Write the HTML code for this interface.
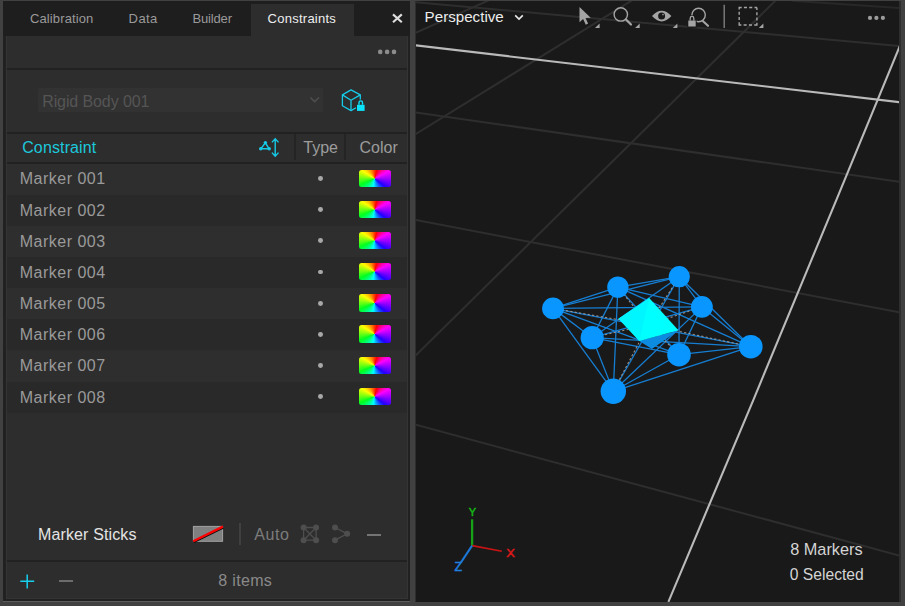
<!DOCTYPE html>
<html>
<head>
<meta charset="utf-8">
<title>Constraints</title>
<style>
html,body{margin:0;padding:0;}
body{width:905px;height:606px;overflow:hidden;background:#414141;font-family:"Liberation Sans",sans-serif;position:relative;}
.abs{position:absolute;}
.t{position:absolute;white-space:nowrap;line-height:1;}
#tabbar{left:3.3px;top:1.2px;width:407.2px;height:34.6px;background:#1e1e1e;}
#activetab{left:250.6px;top:3.8px;width:103px;height:32.2px;background:#2d2d2d;}
#panel{left:5.8px;top:35.8px;width:402.2px;height:563.5px;background:#2d2d2d;border:solid #343434;border-width:0 1.1px 1px 1.2px;box-sizing:border-box;}
#panelL{left:3.3px;top:35.8px;width:407px;height:565.2px;background:#212121;}
#panelB{left:3.3px;top:600.8px;width:407px;height:1.1px;background:#5c5c5c;}
.hl{position:absolute;left:7px;width:400px;height:2px;background:#212121;}
.row{position:absolute;left:7px;width:400px;height:31.17px;}
.row.odd{background:#2e2e2e;}
.row.even{background:#292929;}
.row .nm{position:absolute;left:12.7px;top:7.9px;font-size:16px;color:#9a9a9a;white-space:nowrap;line-height:1;letter-spacing:0.5px;}
.row .dot{position:absolute;left:311.1px;top:12.6px;width:4.8px;height:4.8px;border-radius:50%;background:#a8a8a8;}
.row .sw{position:absolute;left:352.4px;top:6px;width:31.3px;height:17.4px;border-radius:2.5px;background:conic-gradient(from 15deg at 48.5% 50%,#ff0000 0deg,#ff00ff 48deg,#2000ff 113deg,#00ffff 174deg,#00ff20 231deg,#ffff00 288deg,#ff0000 360deg);}
#vp{left:415.6px;top:1.2px;width:483.6px;height:600.4px;background:#191919;overflow:hidden;}
</style>
</head>
<body>
<!-- LEFT PANEL -->
<div id="tabbar" class="abs"></div>
<div id="activetab" class="abs"></div>
<div id="panelL" class="abs"></div>
<div id="panelB" class="abs"></div>
<div id="panel" class="abs"></div>

<span class="t" style="left:30px;top:12px;font-size:13px;color:#9a9a9a;letter-spacing:0.12px;">Calibration</span>
<span class="t" style="left:128.6px;top:12px;font-size:13px;color:#9a9a9a;letter-spacing:0.4px;">Data</span>
<span class="t" style="left:192.4px;top:12px;font-size:13px;color:#9a9a9a;letter-spacing:-0.15px;">Builder</span>
<span class="t" style="left:267.6px;top:12px;font-size:13px;color:#ededed;letter-spacing:0.25px;">Constraints</span>
<svg class="abs" style="left:390px;top:12px" width="14" height="14" viewBox="0 0 14 14"><path d="M3 2.4 L11.8 10.2 M11.8 2.4 L3 10.2" stroke="#dedede" stroke-width="2.1" fill="none"/></svg>

<!-- toolbar dots -->
<svg class="abs" style="left:376px;top:48px" width="22" height="8" viewBox="0 0 22 8"><circle cx="4.2" cy="3.9" r="2.3" fill="#8c8c8c"/><circle cx="11.1" cy="3.9" r="2.3" fill="#8c8c8c"/><circle cx="18" cy="3.9" r="2.3" fill="#8c8c8c"/></svg>
<div class="hl" style="top:68.2px;"></div>

<!-- dropdown -->
<div class="abs" style="left:38.2px;top:88.4px;width:284.6px;height:23.7px;background:#323232;border-radius:1.5px;"></div>
<span class="t" style="left:42.2px;top:94px;font-size:16px;color:#555;letter-spacing:-0.1px;">Rigid Body 001</span>
<svg class="abs" style="left:308px;top:95px" width="14" height="10" viewBox="0 0 14 10"><path d="M2.4 2.5 L6.7 6.6 L11 2.5" stroke="#4e4e4e" stroke-width="1.6" fill="none"/></svg>

<!-- cube lock icon -->
<svg class="abs" style="left:340px;top:89px" width="28" height="24" viewBox="0 0 28 24">
<g fill="none" stroke="#16cbe8" stroke-width="1.3" stroke-linejoin="round">
<path d="M20.3 10.4 V5.9 L11 0.9 L2.4 5.9 V16.8 L11 21.6 L16 18.8"/>
<path d="M2.4 5.9 L11 11.2 L20.3 5.9 M11 11.2 V21.6"/>
</g>
<rect x="17" y="15.8" width="7.6" height="6.1" fill="#0be2fb"/>
<path d="M19 15.8 V13.6 a1.75 1.75 0 0 1 3.5 0 V15.8" fill="none" stroke="#0be2fb" stroke-width="1.4"/>
</svg>

<div class="hl" style="top:131.6px;"></div>

<!-- header -->
<span class="t" style="left:22.2px;top:139.5px;font-size:16px;color:#1cc8dc;letter-spacing:0.13px;">Constraint</span>
<svg class="abs" style="left:257px;top:137px" width="26" height="22" viewBox="0 0 26 22">
<g fill="none" stroke="#16cbe8" stroke-width="1.4">
<path d="M8.4 5.8 L3.8 11.8 L12.1 11.8 Z"/>
<path d="M18.2 2.2 V18.6 M14.9 5.4 L18.2 1.8 L21.5 5.4 M14.9 15.6 L18.2 19.2 L21.5 15.6"/>
</g>
<circle cx="8.4" cy="5.6" r="1.7" fill="#16cbe8"/><circle cx="3.7" cy="11.8" r="1.7" fill="#16cbe8"/><circle cx="12.2" cy="11.8" r="1.7" fill="#16cbe8"/>
</svg>
<div class="abs" style="left:294.3px;top:133.6px;width:1.5px;height:26px;background:#242424;"></div>
<div class="abs" style="left:344.2px;top:133.6px;width:1.5px;height:26px;background:#242424;"></div>
<span class="t" style="left:303.3px;top:139.5px;font-size:16px;color:#9c9c9c;">Type</span>
<span class="t" style="left:359.5px;top:139.5px;font-size:16px;color:#9c9c9c;">Color</span>
<div class="hl" style="top:161.5px;"></div>

<!-- rows -->
<div class="row odd" style="top:163.5px"><span class="nm">Marker 001</span><span class="dot"></span><span class="sw"></span></div>
<div class="row even" style="top:194.7px"><span class="nm">Marker 002</span><span class="dot"></span><span class="sw"></span></div>
<div class="row odd" style="top:225.8px"><span class="nm">Marker 003</span><span class="dot"></span><span class="sw"></span></div>
<div class="row even" style="top:257px"><span class="nm">Marker 004</span><span class="dot"></span><span class="sw"></span></div>
<div class="row odd" style="top:288.2px"><span class="nm">Marker 005</span><span class="dot"></span><span class="sw"></span></div>
<div class="row even" style="top:319.3px"><span class="nm">Marker 006</span><span class="dot"></span><span class="sw"></span></div>
<div class="row odd" style="top:350.5px"><span class="nm">Marker 007</span><span class="dot"></span><span class="sw"></span></div>
<div class="row even" style="top:381.7px"><span class="nm">Marker 008</span><span class="dot"></span><span class="sw"></span></div>

<!-- marker sticks -->
<span class="t" style="left:38px;top:527px;font-size:16px;color:#e4e4e4;letter-spacing:0.13px;">Marker Sticks</span>
<svg class="abs" style="left:191px;top:524px" width="36" height="22" viewBox="0 0 36 22">
<rect x="2.4" y="2.4" width="29.2" height="14.9" fill="#808080" stroke="#a2a2a2" stroke-width="1"/>
<path d="M2.6 17.9 L32.3 3.3" stroke="#101010" stroke-width="2.6"/>
<path d="M2.2 17.2 L31.9 2.6" stroke="#ff0000" stroke-width="2.3"/>
</svg>
<div class="abs" style="left:239.2px;top:523.3px;width:1.5px;height:22px;background:#404040;"></div>
<span class="t" style="left:254.3px;top:527.3px;font-size:16px;color:#7c7c7c;letter-spacing:0.6px;">Auto</span>
<svg class="abs" style="left:299px;top:523px" width="24" height="24" viewBox="0 0 24 24">
<g stroke="#4e4e4e" stroke-width="1.3" fill="none"><path d="M4.6 4.5 H17.1 V17.2 H4.6 Z M4.6 4.5 L17.1 17.2 M17.1 4.5 L4.6 17.2"/></g>
<g fill="#4e4e4e"><circle cx="4.6" cy="4.5" r="3"/><circle cx="17.1" cy="4.5" r="3"/><circle cx="4.6" cy="17.2" r="3"/><circle cx="17.1" cy="17.2" r="3"/></g>
</svg>
<svg class="abs" style="left:330px;top:523px" width="24" height="24" viewBox="0 0 24 24">
<path d="M5 4.5 L17.1 10.8 L5 17.2" stroke="#4e4e4e" stroke-width="1.4" fill="none"/>
<g fill="#4e4e4e"><circle cx="5" cy="4.5" r="3"/><circle cx="17.1" cy="10.8" r="3"/><circle cx="5" cy="17.2" r="3"/></g>
</svg>
<div class="abs" style="left:366.8px;top:534.1px;width:13.8px;height:1.5px;background:#747474;"></div>

<div class="hl" style="top:559.5px;"></div>

<!-- bottom row -->
<svg class="abs" style="left:18px;top:572px" width="20" height="20" viewBox="0 0 20 20"><path d="M9.2 2.5 V16.4 M2.3 9.35 H16.2" stroke="#17d0ee" stroke-width="1.5" fill="none"/></svg>
<div class="abs" style="left:59.2px;top:580.4px;width:14px;height:1.5px;background:#6c6c6c;"></div>
<span class="t" style="left:218.2px;top:573.4px;font-size:16px;color:#8a8a8a;letter-spacing:0.35px;">8 items</span>

<!-- VIEWPORT -->
<div class="abs" style="left:414.6px;top:1.2px;width:486px;height:600.4px;background:#2e2e2e;"></div>
<div id="vp" class="abs">
<svg class="abs" style="left:0;top:0" width="483.6" height="600.4" viewBox="415.6 1.2 483.6 600.4">
<g fill="none" stroke="#2e2e2e" stroke-width="2">
<path d="M414 2.2 L901 46.4"/>
<path d="M414 33.5 L489.5 0"/>
<path d="M414 135 L632.5 0"/>
<path d="M414 112.4 L901 182.3"/>
<path d="M780 -4 L414 357"/>
<path d="M414 220 L901 313"/>
<path d="M414 424.6 L901 556.3"/>
<path d="M792 1 L901 8.3" stroke="#282828"/>
</g>
<g fill="none" stroke="#bababa" stroke-width="2.1">
<path d="M414 45.4 L901 102.6"/>
<path d="M900.3 44 L836 200 Q794 302 753 400 T668 602"/>
</g>
<g stroke="#167ed2" stroke-width="1.3" fill="none">
<path d="M552.6 308.6 L617.5 287.3"/>
<path d="M552.6 308.6 L678.9 276.9"/>
<path d="M552.6 308.6 L701.5 307.1"/>
<path d="M552.6 308.6 L591.8 337.9"/>
<path d="M552.6 308.6 L678.6 354.9"/>
<path d="M552.6 308.6 L750.4 346.9"/>
<path d="M552.6 308.6 L612.9 391.5"/>
<path d="M617.5 287.3 L678.9 276.9"/>
<path d="M617.5 287.3 L701.5 307.1"/>
<path d="M617.5 287.3 L591.8 337.9"/>
<path d="M617.5 287.3 L678.6 354.9"/>
<path d="M617.5 287.3 L750.4 346.9"/>
<path d="M617.5 287.3 L612.9 391.5"/>
<path d="M678.9 276.9 L701.5 307.1"/>
<path d="M678.9 276.9 L591.8 337.9"/>
<path d="M678.9 276.9 L678.6 354.9"/>
<path d="M678.9 276.9 L750.4 346.9"/>
<path d="M678.9 276.9 L612.9 391.5"/>
<path d="M701.5 307.1 L591.8 337.9"/>
<path d="M701.5 307.1 L678.6 354.9"/>
<path d="M701.5 307.1 L750.4 346.9"/>
<path d="M701.5 307.1 L612.9 391.5"/>
<path d="M591.8 337.9 L678.6 354.9"/>
<path d="M591.8 337.9 L750.4 346.9"/>
<path d="M591.8 337.9 L612.9 391.5"/>
<path d="M678.6 354.9 L750.4 346.9"/>
<path d="M678.6 354.9 L612.9 391.5"/>
<path d="M750.4 346.9 L612.9 391.5"/>
</g>
<g stroke="#b0a298" stroke-width="1.1" stroke-dasharray="2.2 2.2" fill="none" opacity="0.85">
<path d="M552.6 308.6 L648.0 325.0"/>
<path d="M617.5 287.3 L648.0 325.0"/>
<path d="M678.9 276.9 L648.0 325.0"/>
<path d="M701.5 307.1 L648.0 325.0"/>
<path d="M591.8 337.9 L648.0 325.0"/>
<path d="M678.6 354.9 L648.0 325.0"/>
<path d="M750.4 346.9 L648.0 325.0"/>
<path d="M612.9 391.5 L648.0 325.0"/>
</g>
<path d="M638.5 341 L677.9 330.6 L651.5 349.2 Z" fill="#0c8be0"/>
<path d="M618.2 318.9 L648.8 298.2 L678 330.4 L639 341.3 Z" fill="#00ffff"/>
<path d="M648.8 298.2 L639 341.3 L618.2 318.9 Z" fill="#00f6ff"/>
<g fill="#0a96ff">
<circle cx="552.6" cy="308.6" r="10.9"/>
<circle cx="617.5" cy="287.3" r="10.7"/>
<circle cx="678.9" cy="276.9" r="10.6"/>
<circle cx="701.5" cy="307.1" r="10.9"/>
<circle cx="591.8" cy="337.9" r="11.6"/>
<circle cx="678.6" cy="354.9" r="11.8"/>
<circle cx="750.4" cy="346.9" r="11.8"/>
<circle cx="612.9" cy="391.5" r="12.7"/>
</g>
<!-- gizmo -->
<g fill="none" stroke-width="2">
<path d="M471.7 546 L471.7 519.5" stroke="#17a117" stroke-width="2.3"/>
<path d="M471.7 545.8 L501.4 551.5" stroke="#c81414" stroke-width="1.6"/>
<path d="M471.7 545.8 L460.6 562.6" stroke="#1c78d6"/>
</g>
<text x="472" y="516.3" font-size="11" fill="#14b414" stroke="#14b414" stroke-width="0.5" text-anchor="middle" font-family="Liberation Sans, sans-serif">Y</text>
<text x="510.1" y="557.2" font-size="11" fill="#d81818" stroke="#d81818" stroke-width="0.5" text-anchor="middle" font-family="Liberation Sans, sans-serif" textLength="8.6" lengthAdjust="spacingAndGlyphs">X</text>
<text x="457.9" y="571" font-size="12.4" fill="#1f80e0" stroke="#1f80e0" stroke-width="0.5" text-anchor="middle" font-family="Liberation Sans, sans-serif">Z</text>
<!-- toolbar icons -->
<circle cx="698.2" cy="15.2" r="6.7" fill="none" stroke="#a4a4a4" stroke-width="1.4"/>
<path d="M686.9 28 V19.7 H688.7 V18.4 a2.9 2.9 0 0 1 5.8 0 V19.7 H696.3 V28 Z" fill="#191919"/>
<g fill="#a4a4a4" stroke="none">
<path d="M579.1 7.2 L579.1 22.4 L582.7 19.2 L585.4 24.9 L587.7 23.8 L585.1 18.3 L590.3 18 Z"/>
<path d="M599.2 23.6 V28.2 H594.6 Z"/>
<path d="M639.3 23.6 V28.2 H634.7 Z"/>
<path d="M677 23.6 V28.2 H672.4 Z"/>
<path d="M763 23.6 V28.2 H758.4 Z"/>
<rect x="687.9" y="20.7" width="7.4" height="6"/>
<path d="M651.6 16.3 Q661.3 5.4 671 16.3 Q661.3 27 651.6 16.3 Z"/>
</g>
<g fill="none" stroke="#a4a4a4">
<circle cx="620.4" cy="14.6" r="6.7" stroke-width="1.4"/>
<path d="M625.6 19.6 L630.6 24.7" stroke-width="2.2" stroke-linecap="round"/>
<path d="M702.7 21.4 L707.6 26" stroke-width="2.2" stroke-linecap="round"/>
<path d="M689.8 20.7 V18.4 a1.8 1.8 0 0 1 3.6 0 V20.7" stroke-width="1.3"/>
<path d="M738.8 7.7 H756.5 V25.2 H738.8 Z" stroke-width="1.4" stroke-dasharray="2.5 2.2 3.1 2.2 3.1 2.2 2.4 0"/>
</g>
<circle cx="661.2" cy="16.2" r="3.5" fill="#191919"/><circle cx="662.6" cy="14.8" r="0.8" fill="#a4a4a4"/>
<path d="M723.8 4.9 V28.2" stroke="#858585" stroke-width="1.3"/>
<g fill="#9c9c9c"><circle cx="869.6" cy="18.1" r="2.1"/><circle cx="876" cy="18.1" r="2.1"/><circle cx="882.5" cy="18.1" r="2.1"/></g>
<path d="M514.8 15.6 L518.6 19.3 L522.4 15.6" fill="none" stroke="#e8e8e8" stroke-width="1.6"/>
<text x="424.2" y="22.4" font-size="15.2" fill="#ececec" font-family="Liberation Sans, sans-serif" textLength="79.2" lengthAdjust="spacingAndGlyphs">Perspective</text>
<text x="789.8" y="555.7" font-size="16.6" fill="#d4d4d4" font-family="Liberation Sans, sans-serif" textLength="72.5" lengthAdjust="spacingAndGlyphs">8 Markers</text>
<text x="789.4" y="580.7" font-size="16.6" fill="#d4d4d4" font-family="Liberation Sans, sans-serif" textLength="74" lengthAdjust="spacingAndGlyphs">0 Selected</text>
</svg>
</div>
</body>
</html>
